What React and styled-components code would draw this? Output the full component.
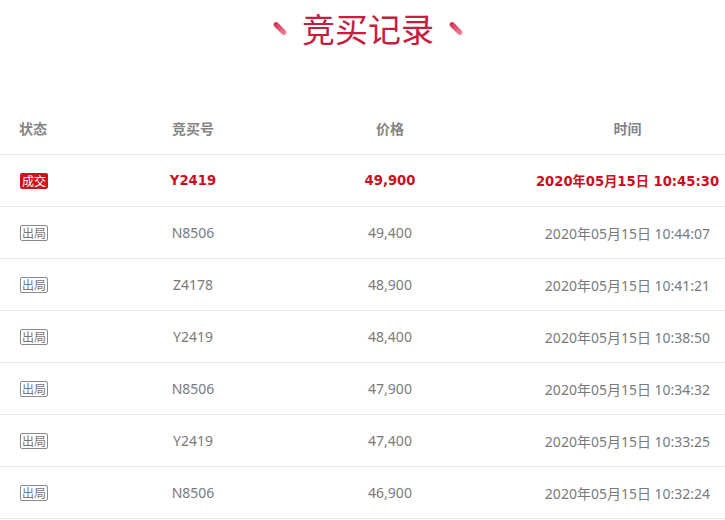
import React from 'react';
import styled, { createGlobalStyle } from 'styled-components';

const GlobalStyle = createGlobalStyle`
  body {
    margin: 0;
    background: #fff;
    font-family: "Noto Sans", "Noto Sans CJK SC", sans-serif;
  }
`;

const Page = styled.div`
  width: 725px;
  overflow: hidden;
`;

const TitleBar = styled.div`
  height: 103px;
  display: flex;
  justify-content: center;
  align-items: flex-start;
  padding-top: 7px;
  padding-left: 11px;
  box-sizing: border-box;
  gap: 14px;
`;

const Title = styled.h1`
  margin: 0;
  font-family: "Noto Sans CJK SC", sans-serif;
  font-size: 33px;
  font-weight: 400;
  line-height: 42px;
  color: #c4203e;
`;

const Dash = styled.span`
  display: block;
  width: 16px;
  height: 5px;
  margin-top: 19px;
  border-radius: 3px;
  background: linear-gradient(90deg, #d3284b, #f2899c);
  transform: rotate(45deg);
`;

const Grid = styled.div`
  display: grid;
  grid-template-columns: 136px 114px 280px 195px;
`;

const Cell = styled.div`
  height: 52px;
  display: flex;
  align-items: center;
  justify-content: ${p => (p.$left ? 'flex-start' : 'center')};
  padding-left: ${p => (p.$left ? '20px' : '0')};
  border-bottom: 1px solid #e8e8e8;
  box-sizing: border-box;
  font-size: ${p => (p.$win ? '13.2px' : '14px')};
  white-space: nowrap;
  color: ${p => (p.$win ? '#c8101e' : '#7a7a7a')};
  font-family: ${p => (p.$win ? '"DejaVu Sans", "Noto Sans CJK SC", sans-serif' : 'inherit')};
  font-weight: ${p => (p.$win ? 700 : 400)};
`;

const HeadCell = styled(Cell)`
  font-family: "Noto Sans CJK SC", sans-serif;
  font-weight: 700;
  color: #858585;
  padding-left: ${p => (p.$left ? '19px' : '0')};
  padding-bottom: 2px;
`;

const Badge = styled.span`
  display: inline-flex;
  align-items: center;
  justify-content: center;
  width: 28px;
  height: 16px;
  box-sizing: border-box;
  font-family: "Noto Sans CJK SC", sans-serif;
  font-size: 12px;
  font-weight: 400;
  line-height: 1;
  border-radius: 2px;
  ${p =>
    p.$win
      ? 'background: #d0121b; color: #fff;'
      : 'border: 1px solid #8a8a8a; color: #777; background: #fff;'}
`;

const rows = [
  { win: true, id: 'Y2419', price: '49,900', time: '2020年05月15日 10:45:30' },
  { id: 'N8506', price: '49,400', time: '2020年05月15日 10:44:07' },
  { id: 'Z4178', price: '48,900', time: '2020年05月15日 10:41:21' },
  { id: 'Y2419', price: '48,400', time: '2020年05月15日 10:38:50' },
  { id: 'N8506', price: '47,900', time: '2020年05月15日 10:34:32' },
  { id: 'Y2419', price: '47,400', time: '2020年05月15日 10:33:25' },
  { id: 'N8506', price: '46,900', time: '2020年05月15日 10:32:24' },
];

export default function App() {
  return (
    <Page>
      <GlobalStyle />
      <TitleBar>
        <Dash />
        <Title>竞买记录</Title>
        <Dash />
      </TitleBar>
      <Grid>
        <HeadCell $left>状态</HeadCell>
        <HeadCell>竞买号</HeadCell>
        <HeadCell>价格</HeadCell>
        <HeadCell>时间</HeadCell>
        {rows.map((r, i) => (
          <React.Fragment key={i}>
            <Cell $left>
              <Badge $win={r.win}>{r.win ? '成交' : '出局'}</Badge>
            </Cell>
            <Cell $win={r.win}>{r.id}</Cell>
            <Cell $win={r.win}>{r.price}</Cell>
            <Cell $win={r.win}>{r.time}</Cell>
          </React.Fragment>
        ))}
      </Grid>
    </Page>
  );
}
